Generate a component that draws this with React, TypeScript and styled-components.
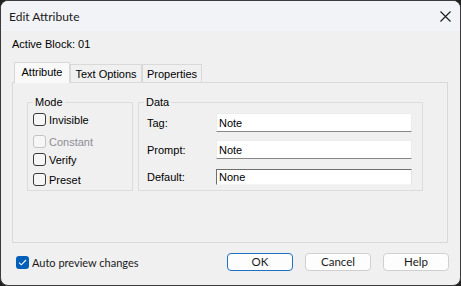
import React from "react";
import styled, { createGlobalStyle } from "styled-components";

const GlobalStyle = createGlobalStyle`
  html, body {
    margin: 0;
    padding: 0;
    background: #202020;
  }
  body {
    width: 461px;
    height: 286px;
    overflow: hidden;
  }
`;

const dlgFont = `"Liberation Sans", Arial, sans-serif`;
const uiFont = `Lato, "Noto Sans", sans-serif`;

const Window = styled.div`
  width: 461px;
  height: 286px;
  box-sizing: border-box;
  border: 1px solid #3b3b3b;
  border-radius: 8px;
  overflow: hidden;
  background: #f0f0f0;
  display: flex;
  flex-direction: column;
`;

const TitleBar = styled.div`
  height: 30px;
  flex: none;
  background: #f2f3f7;
  display: flex;
  align-items: center;
  justify-content: space-between;
  padding: 0 9px 0 8px;
  font-family: ${uiFont};
  font-size: 12px;
  color: #1a1a1a;
`;

const CloseIcon = styled.svg`
  width: 11px;
  height: 11px;
  display: block;
`;

const Body = styled.div`
  flex: 1;
  display: flex;
  flex-direction: column;
  padding: 0 12px 0 11px;
  font-family: ${dlgFont};
  font-size: 11px;
  color: #000;
`;

const ActiveBlock = styled.div`
  margin-top: 6px;
  height: 14px;
  line-height: 14px;
`;

const TabRow = styled.div`
  margin-top: 11px;
  height: 20px;
  display: flex;
  align-items: flex-end;
  padding-left: 2px;
  position: relative;
  z-index: 1;
`;

const Tab = styled.div<{ $active?: boolean; $w: number }>`
  box-sizing: border-box;
  width: ${(p) => p.$w}px;
  height: ${(p) => (p.$active ? 21 : 18)}px;
  margin-bottom: ${(p) => (p.$active ? -1 : 0)}px;
  border: 1px solid #d9d9d9;
  border-bottom: none;
  background: ${(p) => (p.$active ? "#f9f9f9" : "#f0f0f0")};
  display: flex;
  justify-content: center;
  align-items: center;
  padding-bottom: ${(p) => (p.$active ? 2 : 0)}px;
  line-height: 12px;
`;

const Panel = styled.div`
  box-sizing: border-box;
  height: 161px;
  border: 1px solid #d9d9d9;
  background: #f0f0f0;
  padding: 13px 0 0 14px;
  display: flex;
  gap: 5px;
  align-items: flex-start;
`;

const Group = styled.fieldset<{ $w: number; $pl: number }>`
  box-sizing: border-box;
  width: ${(p) => p.$w}px;
  height: 95px;
  margin: 0;
  border: 1px solid #dcdcdc;
  padding: 0 10px 0 ${(p) => p.$pl}px;
  min-width: 0;
`;

const Legend = styled.legend<{ $ml: number }>`
  padding: 0 2px;
  margin-left: ${(p) => p.$ml}px;
  line-height: 12px;
  font-size: 11px;
`;

const CheckRow = styled.label<{ $mt: number; $disabled?: boolean }>`
  display: flex;
  align-items: center;
  gap: 3px;
  height: 13px;
  margin-top: ${(p) => p.$mt}px;
  color: ${(p) => (p.$disabled ? "#8d8d95" : "#000")};
`;

const Box = styled.span<{ $disabled?: boolean }>`
  box-sizing: border-box;
  width: 13px;
  height: 13px;
  flex: none;
  border: 1px solid ${(p) => (p.$disabled ? "#c4c4c4" : "#3a3a3a")};
  border-radius: 3px;
  background: #f6f6f6;
`;

const FieldList = styled.div`
  display: flex;
  flex-direction: column;
  gap: 8px;
  margin-top: 5px;
`;

const FieldRow = styled.div`
  display: flex;
  align-items: center;
  height: 19px;
`;

const FieldLabel = styled.span`
  width: 69px;
  flex: none;
`;

const Input = styled.div<{ $sunken?: boolean }>`
  box-sizing: border-box;
  width: 196px;
  height: ${(p) => (p.$sunken ? 16 : 19)}px;
  background: #fff;
  padding-left: 2px;
  display: flex;
  align-items: center;
  border: 1px solid ${(p) => (p.$sunken ? "#e3e3e3" : "#ececec")};
  border-bottom-color: ${(p) => (p.$sunken ? "#f4f4f4" : "#868686")};
  border-top-color: ${(p) => (p.$sunken ? "#6e6e6e" : "#ececec")};
  border-left-color: ${(p) => (p.$sunken ? "#6e6e6e" : "#ececec")};
  border-radius: ${(p) => (p.$sunken ? 0 : 1)}px;
  color: #000;
`;

const Footer = styled.div`
  margin-top: 10px;
  margin-right: -1px;
  height: 18px;
  display: flex;
  align-items: center;
  justify-content: space-between;
  padding-left: 4px;
  font-family: ${uiFont};
  font-size: 11px;
`;

const Auto = styled.label`
  display: flex;
  align-items: center;
  gap: 3px;
  color: #1a1a1a;
`;

const BlueBox = styled.span`
  width: 13px;
  height: 13px;
  border-radius: 3px;
  background: #005fb8;
  display: flex;
  align-items: center;
  justify-content: center;
`;

const Buttons = styled.div`
  display: flex;
  gap: 12px;
`;

const Button = styled.button<{ $default?: boolean }>`
  box-sizing: border-box;
  width: 66px;
  height: 18px;
  padding: 0;
  border: 1px solid ${(p) => (p.$default ? "#1f6fc2" : "#d0d0d0")};
  border-radius: 4px;
  background: #fdfdfd;
  font-family: ${uiFont};
  font-size: 11.5px;
  color: #1a1a1a;
  line-height: 16px;
`;

export default function App() {
  return (
    <>
      <GlobalStyle />
      <Window>
        <TitleBar>
          <span>Edit Attribute</span>
          <CloseIcon viewBox="0 0 11 11">
            <path d="M0.5 0.5 L10.5 10.5 M10.5 0.5 L0.5 10.5" stroke="#1a1a1a" strokeWidth="1.1" />
          </CloseIcon>
        </TitleBar>
        <Body>
          <ActiveBlock>Active Block: 01</ActiveBlock>
          <TabRow>
            <Tab $active $w={56}>Attribute</Tab>
            <Tab $w={72}>Text Options</Tab>
            <Tab $w={60}>Properties</Tab>
          </TabRow>
          <Panel>
            <Group $w={106} $pl={5}>
              <Legend $ml={0}>Mode</Legend>
              <CheckRow $mt={5}>
                <Box />
                Invisible
              </CheckRow>
              <CheckRow $mt={9} $disabled>
                <Box $disabled />
                Constant
              </CheckRow>
              <CheckRow $mt={5}>
                <Box />
                Verify
              </CheckRow>
              <CheckRow $mt={7}>
                <Box />
                Preset
              </CheckRow>
            </Group>
            <Group $w={285} $pl={8}>
              <Legend $ml={-3}>Data</Legend>
              <FieldList>
                <FieldRow>
                  <FieldLabel>Tag:</FieldLabel>
                  <Input>Note</Input>
                </FieldRow>
                <FieldRow>
                  <FieldLabel>Prompt:</FieldLabel>
                  <Input>Note</Input>
                </FieldRow>
                <FieldRow>
                  <FieldLabel>Default:</FieldLabel>
                  <Input $sunken>None</Input>
                </FieldRow>
              </FieldList>
            </Group>
          </Panel>
          <Footer>
            <Auto>
              <BlueBox>
                <svg width="9" height="7" viewBox="0 0 9 7">
                  <path d="M1 3.6 L3.3 5.8 L8 1" stroke="#fff" strokeWidth="1.1" fill="none" />
                </svg>
              </BlueBox>
              Auto preview changes
            </Auto>
            <Buttons>
              <Button $default>OK</Button>
              <Button>Cancel</Button>
              <Button>Help</Button>
            </Buttons>
          </Footer>
        </Body>
      </Window>
    </>
  );
}
